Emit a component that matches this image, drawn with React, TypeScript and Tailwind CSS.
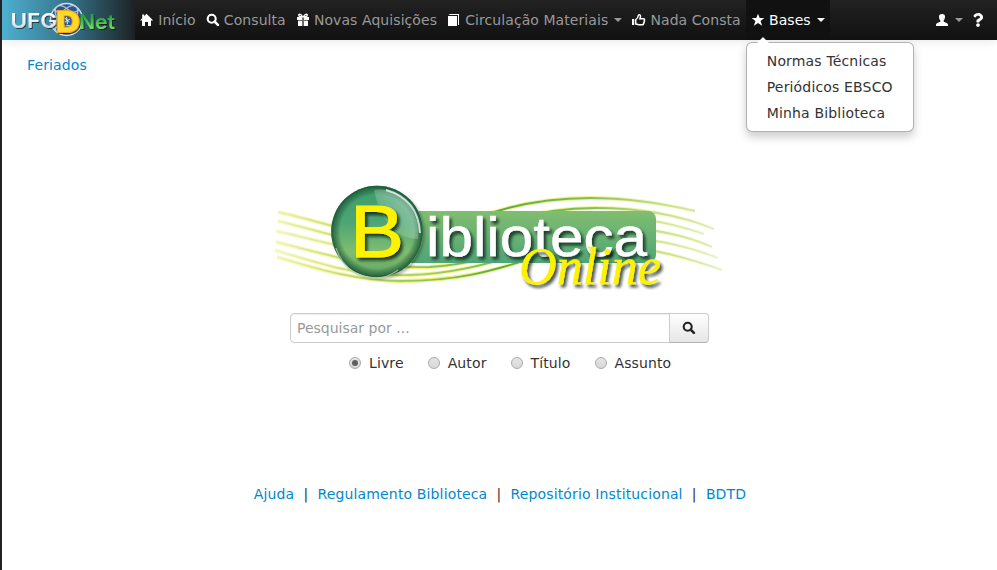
import React from "react";
import { FaQuestion } from "react-icons/fa";

const HomeIcon = () => (
  <svg className="h-[14px] w-[14px]" viewBox="0 0 14 14" fill="currentColor">
    <path d="M6.500 .8 13.200 7.400H11V13H8V9H5v4H2V7.400H0L2.200 5.200V1.500h2v1.700z" />
  </svg>
);
const SearchIcon = () => (
  <svg className="h-[14px] w-[14px]" viewBox="0 0 14 14" fill="none" stroke="currentColor">
    <circle cx="5.7" cy="5.7" r="4" strokeWidth="2.1" />
    <path d="m8.7 8.7 3.200 3.200" strokeWidth="2.6" strokeLinecap="round" />
  </svg>
);
const GiftIcon = () => (
  <svg className="h-[14px] w-[14px]" viewBox="0 0 14 14" fill="currentColor">
    <path d="M1 4h5v3H1zM8 4h5v3H8zM2 8h4v5H2zM8 8h4v5H8z" />
    <path d="M6 4h2v9H6zM2 7h10v1H2z" opacity=".35" />
    <path d="M6.5 3.800C5.500 1 2.700.6 2.700 2.200c0 1.100 1.800 1.600 3.800 1.600ZM7.500 3.800C8.500 1 11.300.6 11.300 2.200c0 1.100-1.800 1.600-3.800 1.600Z" fill="none" stroke="currentColor" strokeWidth="1.300" />
  </svg>
);
const BookIcon = () => (
  <svg className="h-[14px] w-[14px]" viewBox="0 0 14 14" fill="currentColor">
    <path d="M1 3h9v10H1zM3 1H12v11h-1V2H1.500z" />
  </svg>
);
const ThumbIcon = () => (
  <svg className="h-[14px] w-[14px]" viewBox="0 0 14 14" fill="currentColor">
    <path d="M0 6h2.200v6H0z" />
    <path d="M3.700 6.700C5.500 5.800 6 4.500 6.300 2.500c.2-1.300 2.200-1 2.200.7 0 1-.3 1.700-.6 2.500h3.500c1.200 0 1.400 1 .9 1.700.3.500.2 1.200-.3 1.600.2.500 0 1.200-.5 1.500.1.700-.3 1.200-1.200 1.200H6.800c-1.200 0-2-.6-3.100-.8z" fill="none" stroke="currentColor" strokeWidth="1.500" />
  </svg>
);
const StarIcon = () => (
  <svg className="h-[14px] w-[14px]" viewBox="0 0 14 14" fill="currentColor">
    <path d="m7 .7 1.700 4.300h4.600L9.600 7.900l1.500 4.900L7 9.900l-4.100 2.900 1.500-4.900L.7 5h4.600z" />
  </svg>
);
const UserIcon = () => (
  <svg className="h-[14px] w-[14px]" viewBox="0 0 14 14" fill="currentColor">
    <path d="M4 3.500C4 1.800 5.200 1 7 1s3 .8 3 2.500c0 2-.6 3-1.300 4v1.300c1.300.9 4 1.200 4.300 2.600V13H1v-1.600c.3-1.400 3-1.700 4.300-2.600V7.500C4.600 6.500 4 5.500 4 3.500z" />
  </svg>
);

const Caret = ({ bright = false }: { bright?: boolean }) => (
  <span className={`ml-[6px] h-0 w-0 border-x-4 border-t-4 border-x-transparent ${bright ? "border-t-white" : "border-t-[#999]"}`} />
);

function NavItem({ icon, label, caret, active }: { icon: React.ReactNode; label: string; caret?: boolean; active?: boolean }) {
  return (
    <li className={`flex h-10 items-center px-[5px] tracking-[0.07px] ${active ? "bg-[#111] text-white" : "text-[#999]"}`}>
      <span className="mr-[4.2px] text-white">{icon}</span>
      <span>{label}</span>
      {caret && <Caret bright={active} />}
    </li>
  );
}

function SiteLogo() {
  return (
    <svg className="h-10 w-[133px] shrink-0" viewBox="2 0 133 40">
      <defs>
        <linearGradient id="brand"><stop offset="0" stopColor="#4eb0d0" /><stop offset=".5" stopColor="#35748a" /><stop offset=".95" stopColor="#202a2e" /><stop offset="1" stopColor="#1c2022" /></linearGradient>
        <linearGradient id="silver" x2="0" y2="1"><stop offset=".3" stopColor="#fff" /><stop offset="1" stopColor="#b9cbd0" /></linearGradient>
        <linearGradient id="leaf" x2="0" y2="1"><stop offset=".3" stopColor="#2ca044" /><stop offset=".85" stopColor="#7be65d" /></linearGradient>
        <filter id="brandShadow"><feDropShadow dx="1" dy="1" stdDeviation=".7" floodOpacity=".6" /></filter>
      </defs>
      <path fill="url(#brand)" d="M2 0h133v40H2z" />
      <circle cx="66.500" cy="19.500" r="16" fill="#2c5794" stroke="#d4e0ea" strokeWidth="1.300" />
      <g fill="none" stroke="#b5c8dc" strokeWidth="1.200">
        <ellipse cx="66.500" cy="19.500" rx="8" ry="16" transform="rotate(35 66.500 19.500)" />
        <ellipse cx="66.500" cy="19.500" rx="8" ry="16" transform="rotate(-35 66.500 19.500)" />
        <path d="M53 10c9 5 19 4 27 0M53 29c9-5 19-4 27 0" />
      </g>
      <g filter="url(#brandShadow)" fontFamily="Inter, 'Liberation Sans', sans-serif">
        <text x="10.500" y="28" fontSize="20" fontWeight="600" fill="url(#silver)" textLength="46.500" lengthAdjust="spacingAndGlyphs">UFG</text>
        <text x="79" y="28.500" fontSize="19.500" fontWeight="600" fill="url(#leaf)" textLength="36" lengthAdjust="spacingAndGlyphs">Net</text>
        <text x="56" y="31.500" fontSize="29" fontWeight="800" fill="#ffd92e" stroke="#f3a90c" strokeWidth="2" paintOrder="stroke" textLength="24" lengthAdjust="spacingAndGlyphs">D</text>
      </g>
      <path d="M64.500 16.500v8h3.500q3-4 0-8z" fill="#315d94" />
      <path d="m64.500 18 5 4m-3-5 1 7m2.500-5-5 3" stroke="#e4ecf4" strokeWidth="1" />
    </svg>
  );
}

function LibraryLogo() {
  return (
    <svg className="h-[120px] w-[460px]" viewBox="270 180 460 120">
      <defs>
        <linearGradient id="panel" x2="0" y2="1"><stop stopColor="#80bd70" /><stop offset="1" stopColor="#4fa577" /></linearGradient>
        <linearGradient id="ball" x2="0" y2="1"><stop stopColor="#3e9c69" /><stop offset=".4" stopColor="#4ca574" /><stop offset=".72" stopColor="#80bd70" /><stop offset="1" stopColor="#5fa661" /></linearGradient>
        <radialGradient id="rim"><stop offset=".8" stopColor="#164c30" stopOpacity="0" /><stop offset=".93" stopColor="#1c5537" stopOpacity=".6" /><stop offset="1" stopColor="#1c5537" stopOpacity=".95" /></radialGradient>
        <linearGradient id="shine" x1=".9" y1=".1" x2=".2" y2=".8"><stop stopColor="#fff" stopOpacity=".45" /><stop offset="1" stopColor="#fff" stopOpacity=".05" /></linearGradient>
        <linearGradient id="wave" gradientUnits="userSpaceOnUse" x1="275" y1="0" x2="725" y2="0"><stop stopColor="#c3da70" stopOpacity=".2" /><stop offset=".15" stopColor="#b4d66c" stopOpacity=".8" /><stop offset=".5" stopColor="#54ac46" /><stop offset=".7" stopColor="#82c05c" /><stop offset=".87" stopColor="#bddc84" stopOpacity=".8" /><stop offset="1" stopColor="#bddc84" stopOpacity=".4" /></linearGradient>
        <linearGradient id="glow" gradientUnits="userSpaceOnUse" x1="275" y1="0" x2="725" y2="0"><stop stopColor="#eeee50" stopOpacity=".3" /><stop offset=".35" stopColor="#eeee50" stopOpacity=".8" /><stop offset=".7" stopColor="#e9ed60" stopOpacity=".7" /><stop offset="1" stopColor="#e9ed60" stopOpacity=".05" /></linearGradient>
        <filter id="soft" x="-20%" y="-20%" width="150%" height="150%"><feDropShadow dx="2.500" dy="3" stdDeviation="1.700" floodColor="#00180e" floodOpacity=".75" /></filter>
        <filter id="ballShadow" x="-20%" y="-20%" width="150%" height="150%"><feDropShadow dx="2" dy="2" stdDeviation="1.500" floodOpacity=".3" /></filter>
        <g id="waves" fill="none">
          <path d="M278 212C340 226 400 250 440 235C480 213 530 198 590 198C632 198 665 204 695 211" />
          <path d="M278 221C340 236 390 255 440 245C500 218 550 208 595 208C645 208 685 217 714 229" />
          <path d="M276 231C330 243 370 257 430 255C510 250 550 216 610 217C652 218 680 226 704 234" opacity=".8" />
          <path d="M276 242C325 254 370 269 430 267C510 262 550 226 615 227C660 229 690 237 712 247" />
          <path d="M275 250C320 264 360 277 410 275C490 273 545 238 610 237C660 239 690 247 718 258" opacity=".8" />
          <path d="M277 257C320 270 360 281 400 281C470 281 505 266 540 256C600 236 660 248 722 270" />
        </g>
      </defs>
      <use href="#waves" stroke="url(#glow)" strokeWidth="4" />
      <use href="#waves" stroke="url(#wave)" strokeWidth="1.800" />
      <path d="M405 211H648a8 8 0 0 1 8 8v36a8 8 0 0 1-8 8H405z" fill="url(#panel)" />
      <circle cx="377" cy="231.500" r="45.800" fill="url(#ball)" filter="url(#ballShadow)" />
      <circle cx="377" cy="231.500" r="45.800" fill="url(#rim)" />
      <path d="M374 190C400 186 421 211 418 239Q384 238 374 190Z" fill="url(#shine)" />
      <path d="M386 190q32 9 34 43" fill="none" stroke="#fff" strokeWidth="2" opacity=".75" />
      <path d="M336 248c10 30 41 38 62 22" fill="none" stroke="#b6d8b4" strokeWidth="1.300" opacity=".7" />
      <text x="350" y="256.500" fontFamily="'Liberation Sans', sans-serif" fontSize="73.500" fill="#fff200" stroke="#fff200" strokeWidth="1" textLength="54" lengthAdjust="spacingAndGlyphs" filter="url(#soft)">B</text>
      <text x="426" y="256" fontFamily="'Liberation Sans', sans-serif" fontSize="55" fill="#fff" stroke="#fff" strokeWidth=".4" textLength="221" lengthAdjust="spacingAndGlyphs" filter="url(#soft)">iblioteca</text>
      <text x="519" y="284" fontFamily="'Liberation Serif', serif" fontStyle="italic" fontSize="53" fill="#fff200" stroke="#fff200" strokeWidth=".4" textLength="142" lengthAdjust="spacingAndGlyphs" filter="url(#soft)">Online</text>
    </svg>
  );
}

function Option({ label, checked }: { label: string; checked?: boolean }) {
  return (
    <label className="flex items-center gap-2 tracking-[0.12px]">
      <span className="flex h-3 w-3 items-center justify-center rounded-full border border-[#aaa] bg-linear-to-b from-[#e5e5e5] to-[#d8d8d8]">
        {checked && <span className="h-[6px] w-[6px] rounded-full bg-[#606060]" />}
      </span>
      {label}
    </label>
  );
}

const footerLinks = ["Ajuda", "Regulamento Biblioteca", "Repositório Institucional", "BDTD"];

export default function App() {
  return (
    <div className="h-[570px] w-[997px] overflow-hidden border-l-2 border-[#222] bg-white font-['DejaVu_Sans',sans-serif] text-[14px] leading-5 text-[#333]">
      <nav className="flex h-10 bg-linear-to-b from-[#222] to-[#111] shadow-[0_1px_10px_rgba(0,0,0,0.1)]">
        <SiteLogo />
        <ul className="flex flex-1 whitespace-nowrap">
          <NavItem icon={<HomeIcon />} label="Início" />
          <NavItem icon={<SearchIcon />} label="Consulta" />
          <NavItem icon={<GiftIcon />} label="Novas Aquisições" />
          <NavItem icon={<BookIcon />} label="Circulação Materiais" caret />
          <NavItem icon={<ThumbIcon />} label="Nada Consta" />
          <li className="relative">
            <ul>
              <NavItem icon={<StarIcon />} label="Bases" caret active />
            </ul>
            <ul className="absolute top-[42px] left-0 z-10 w-[168px] rounded-md border border-black/30 bg-white py-[5px] tracking-[0.16px] shadow-[0_5px_10px_rgba(0,0,0,0.2)]">
              <span className="absolute -top-[6px] left-[10px] border-x-[6px] border-b-[6px] border-x-transparent border-b-white" />
              <li className="px-5 py-[3px]">Normas Técnicas</li>
              <li className="px-5 py-[3px]">Periódicos EBSCO</li>
              <li className="px-5 py-[3px]">Minha Biblioteca</li>
            </ul>
          </li>
        </ul>
        <div className="flex items-center pr-[12px] text-white">
          <UserIcon />
          <Caret />
          <span className="ml-[8px]"><FaQuestion size={14} /></span>
        </div>
      </nav>
      <main className="flex flex-col">
        <a className="mt-[15px] ml-[25px] self-start tracking-[0.12px] text-[#0088cc]">Feriados</a>
        <div className="mt-[105px] ml-[268px] h-[120px]"><LibraryLogo /></div>
        <form className="mt-[13px] ml-[288px] flex h-[30px] w-[419px]">
          <input placeholder="Pesquisar por ..." className="w-[380px] rounded-l border border-[#ccc] bg-white px-[6px] shadow-[inset_0_1px_1px_rgba(0,0,0,0.075)] placeholder:text-[#999]" />
          <button type="button" className="-ml-px flex w-10 items-center justify-center rounded-r border border-[#ccc] border-b-[#b3b3b3] bg-linear-to-b from-white to-[#e6e6e6] text-[#222]"><SearchIcon /></button>
        </form>
        <div className="mt-[10px] ml-[347px] flex gap-[24px]">
          <Option label="Livre" checked />
          <Option label="Autor" />
          <Option label="Título" />
          <Option label="Assunto" />
        </div>
        <footer className="mt-[111px] flex justify-center pl-px tracking-[0.14px] whitespace-pre">
          {footerLinks.map((label, i) => (
            <React.Fragment key={label}>
              {i > 0 && <span>{"  |  "}</span>}
              <a className="text-[#0088cc]">{label}</a>
            </React.Fragment>
          ))}
        </footer>
      </main>
    </div>
  );
}
